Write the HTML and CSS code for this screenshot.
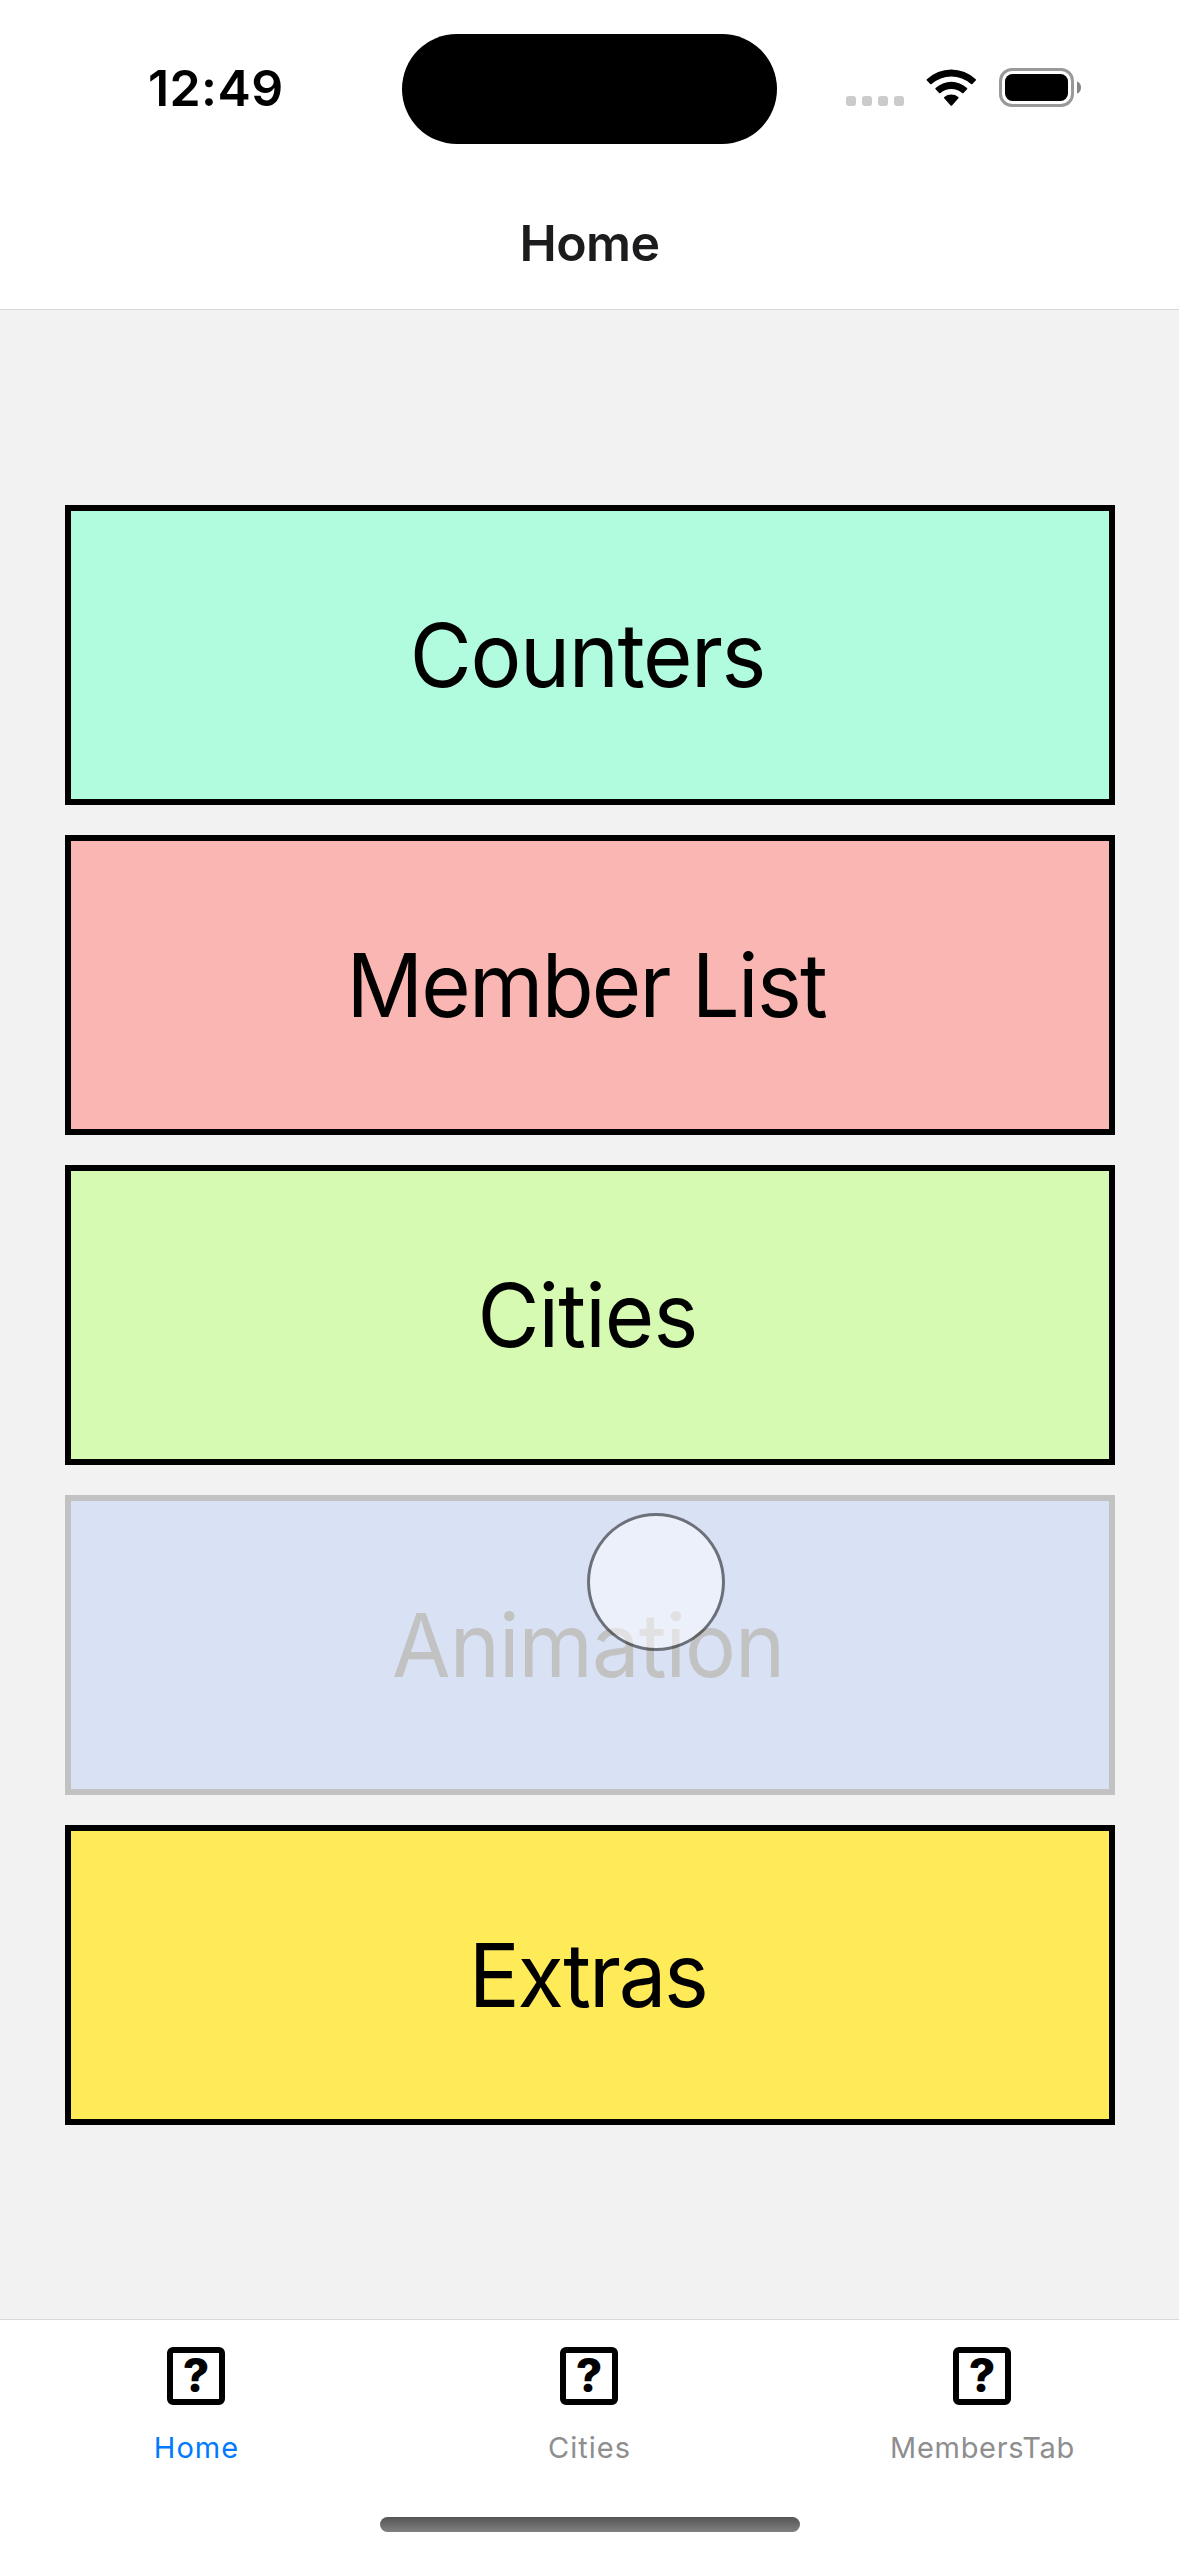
FILE: index.html
```html
<!DOCTYPE html>
<html lang="en">
<head>
<meta charset="utf-8">
<title>Home</title>
<link rel="stylesheet" href="styles.css">
</head>
<body>
<div class="screen">
  <header class="status-bar">
    <div class="time">12:49</div>
    <div class="island"></div>
    <div class="indicators">
      <svg class="signal" width="58" height="39" viewBox="0 0 58 39" fill="#cbcbcb">
        <rect x="0" y="28" width="10" height="10" rx="3"/>
        <rect x="16" y="28" width="10" height="10" rx="3"/>
        <rect x="32" y="28" width="10" height="10" rx="3"/>
        <rect x="48" y="28" width="10" height="10" rx="3"/>
      </svg>
      <svg class="wifi" width="51" height="39" viewBox="0 0 51 39">
        <path d="M.9 12.6Q.2 11.9.9 11.2A35.3 35.3 0 0 1 49.7 11.2Q50.4 11.9 49.7 12.6L46.4 15.9Q45.7 16.6 45 15.9A29.8 29.8 0 0 0 5.6 15.9Q4.9 16.6 4.2 15.9Z"/>
        <path d="M9.6 21.3Q8.9 20.6 9.6 19.9A23.3 23.3 0 0 1 41 19.9Q41.7 20.6 41 21.3L37.5 24.9Q36.8 25.6 36.1 24.9A16.8 16.8 0 0 0 14.5 24.9Q13.8 25.6 13.1 24.9Z"/>
        <path d="M18.2 30.2Q17.6 29.5 18.3 28.9A11.4 11.4 0 0 1 32.3 28.9Q33 29.5 32.4 30.2L26 37.4Q25.3 38.2 24.6 37.4Z"/>
      </svg>
      <svg class="battery" width="83" height="39" viewBox="0 0 83 39">
        <rect x="1.5" y="1.5" width="72" height="36" rx="11.5" fill="none" stroke="#999" stroke-width="3"/>
        <rect x="6" y="6" width="63" height="27" rx="7.5"/>
        <path d="M78 13.2Q82 15.2 82 19.5T78 25.8Z" fill="#858585"/>
      </svg>
    </div>
  </header>
  <div class="nav-bar"><h1 class="nav-title">Home</h1></div>
  <main class="menu">
    <button class="card card-counters"><span class="card-label">Counters</span></button>
    <button class="card card-members"><span class="card-label">Member List</span></button>
    <button class="card card-cities"><span class="card-label">Cities</span></button>
    <button class="card card-animation"><span class="card-label">Animation</span><span class="touch"></span></button>
    <button class="card card-extras"><span class="card-label">Extras</span></button>
  </main>
  <nav class="tab-bar">
    <div class="tab tab-active"><span class="tab-icon">?</span><span class="tab-label">Home</span></div>
    <div class="tab"><span class="tab-icon">?</span><span class="tab-label">Cities</span></div>
    <div class="tab tab-members"><span class="tab-icon">?</span><span class="tab-label">MembersTab</span></div>
    <div class="home-indicator"></div>
  </nav>
</div>
</body>
</html>
```
FILE: styles.css
```css
* {
  box-sizing: border-box;
}

body {
  margin: 0;
  background: #fff;
  font-family: Inter, "Liberation Sans", sans-serif;
}

.screen {
  display: flex;
  flex-direction: column;
  width: 1179px;
  height: 2556px;
  overflow: hidden;
}

/* Status bar */
.status-bar {
  display: grid;
  grid-template-columns: 402px 375px 1fr;
  align-items: start;
  height: 177px;
}

.time {
  padding: 58px 0 0 148px;
  font-size: 50px;
  font-weight: 600;
  line-height: 60px;
  letter-spacing: 0.4px;
  color: #000;
}

.island {
  height: 110px;
  margin-top: 34px;
  border-radius: 55px;
  background: #000;
}

.indicators {
  display: flex;
  gap: 22px;
  padding: 68px 0 0 69px;
}

/* Navigation bar */
.nav-bar {
  display: flex;
  align-items: center;
  justify-content: center;
  height: 133px;
  border-bottom: 1px solid #d8d8d8;
}

.nav-title {
  margin: 0;
  font-size: 50px;
  font-weight: 600;
  line-height: 60px;
  letter-spacing: -0.6px;
  color: #1c1c1e;
}

/* Menu cards */
.menu {
  display: flex;
  flex: 1;
  flex-direction: column;
  justify-content: center;
  gap: 30px;
  padding: 0 64px 0 65px;
  background: #f2f2f2;
}

.card {
  position: relative;
  display: flex;
  align-items: center;
  justify-content: center;
  height: 300px;
  padding: 0;
  border: 6px solid #000;
  border-radius: 0;
  font-family: inherit;
  font-size: 88px;
  line-height: 106px;
  color: #000;
}

.card-label {
  transform: translateX(var(--shift, -2.6px)) scaleX(0.965);
}

.card-counters {
  background: #b1fbdf;
  letter-spacing: -1.5px;
}

.card-members {
  --shift: -4.3px;
  background: #fab6b2;
  letter-spacing: -1.85px;
}

.card-cities {
  background: #d6fab1;
  letter-spacing: -0.9px;
}

.card-animation {
  --shift: -2px;
  border-color: #c2c2c2;
  background: #d9e1f4;
  color: #c2c2c2;
  letter-spacing: -1px;
}

.card-extras {
  background: #ffea58;
  letter-spacing: -2.3px;
}

/* Touch point over the pressed card */
.touch {
  position: absolute;
  top: 12px;
  left: 516px;
  width: 138px;
  height: 138px;
  border: 3px solid rgba(0, 0, 0, 0.5);
  border-radius: 50%;
  background: rgba(255, 255, 255, 0.5);
  background-clip: padding-box;
}

/* Tab bar */
.tab-bar {
  display: grid;
  grid-template-columns: repeat(3, 1fr);
  grid-template-rows: 197px 15px;
  height: 237px;
  border-top: 1px solid #d8d8d8;
}

.tab {
  display: flex;
  flex-direction: column;
  align-items: center;
  gap: 25px;
  padding-top: 27px;
  color: #8e8e8f;
}

.tab-active {
  color: #007aff;
}

.tab-icon {
  width: 58px;
  height: 58px;
  margin-right: 1px;
  border: 6px solid #000;
  border-radius: 6px;
  font-size: 46px;
  font-weight: 800;
  line-height: 45px;
  text-align: center;
  color: #000;
}

.tab-label {
  font-size: 29px;
  line-height: 35px;
  letter-spacing: 1px;
}

.tab-members .tab-label {
  letter-spacing: 0.7px;
}

.home-indicator {
  grid-column: 1 / -1;
  justify-self: center;
  width: 420px;
  border-radius: 7.5px;
  background: linear-gradient(#555, #808080);
}
```
